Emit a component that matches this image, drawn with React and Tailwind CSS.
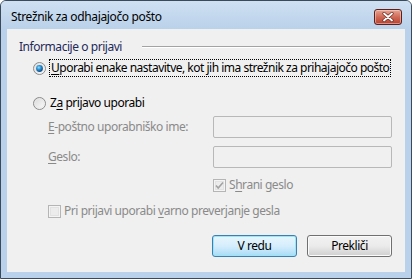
// Windows 7 style "outgoing mail server" dialog
const font = { fontFamily: '"Noto Sans", "Open Sans", sans-serif' };

function Radio({ checked }) {
  return (
    <svg width="13" height="13" viewBox="0 0 13 13" className="shrink-0">
      <defs>
        <linearGradient id="rfill" x1="0" y1="0" x2="1" y2="1">
          <stop offset="0" stopColor="#d6d6d6" />
          <stop offset="1" stopColor="#ffffff" />
        </linearGradient>
        <radialGradient id="rdot" cx="0.4" cy="0.35" r="0.7">
          <stop offset="0" stopColor="#8fe0ff" />
          <stop offset="0.45" stopColor="#2a8fd2" />
          <stop offset="1" stopColor="#0b3f74" />
        </radialGradient>
      </defs>
      <circle cx="6.5" cy="6.5" r="6" fill="url(#rfill)" stroke="#8b8b8b" strokeWidth="1" />
      <circle cx="6.5" cy="6.5" r="4.6" fill="none" stroke="#e8e8e8" strokeWidth="0.8" />
      {checked && <circle cx="6.5" cy="6.5" r="3.4" fill="url(#rdot)" />}
    </svg>
  );
}

function Check({ checked }) {
  return (
    <svg width="13" height="13" viewBox="0 0 13 13" className="shrink-0">
      <rect x="0.5" y="0.5" width="12" height="12" fill="#f4f4f4" stroke="#b5b5b5" />
      <rect x="2.5" y="2.5" width="8" height="8" fill="#ececec" stroke="#e2e2e2" />
      {checked && (
        <path d="M3 6.5 L5.2 9 L10 3.5" fill="none" stroke="#a2a2a2" strokeWidth="1.6" />
      )}
    </svg>
  );
}

function U({ children }) {
  return <span className="underline underline-offset-2 decoration-1">{children}</span>;
}

export default function App() {
  return (
    <div
      className="w-[412px] h-[279px] flex flex-col bg-[#b9d1ea] border border-[#3b4a5a] rounded-t-[6px] overflow-hidden text-[12px] leading-[16px] whitespace-nowrap"
      style={font}
    >
      {/* title bar */}
      <div className="h-[28px] shrink-0 flex items-start bg-gradient-to-b from-[#cfe0f2] to-[#b9d1ea]">
        <div className="pl-[10px] pt-[8px] text-black tracking-[-0.35px]">Strežnik za odhajajočo pošto</div>
        <div className="ml-auto mr-[9px] mt-[8px] w-[28px] h-[16px] rounded-[3px] border border-[#5a1f1f] bg-gradient-to-b from-[#e8a493] via-[#cf6a57] to-[#b8402e] flex items-center justify-center shadow-[inset_0_0_0_1px_rgba(255,220,210,0.5)]">
          <svg width="12" height="10" viewBox="0 0 12 10">
            <path d="M2 1.5 L10 8.5 M10 1.5 L2 8.5" stroke="#6b2a22" strokeWidth="3.2" strokeLinecap="round" />
            <path d="M2 1.5 L10 8.5 M10 1.5 L2 8.5" stroke="#ffffff" strokeWidth="1.8" strokeLinecap="round" />
          </svg>
        </div>
      </div>

      {/* client area */}
      <div className="flex-1 mx-[6px] mb-[6px] bg-[#f0f0f0] flex flex-col pr-[13px] text-black tracking-[-0.45px]">
        {/* group header */}
        <div className="mt-[11px] h-[14px] flex items-center pl-[12px]">
          <span className="text-[#1e2a5a]">Informacije o prijavi</span>
          <div className="flex-1 ml-[20px] mr-[2px] border-t border-[#a3a3a3] border-b border-b-white" />
        </div>

        {/* radio 1 */}
        <div className="mt-[5px] h-[18px] flex items-center pl-[26px]">
          <Radio checked />
          <div className="ml-[3px] h-[18px] leading-[15px] px-[1px] border border-dotted border-black tracking-[-0.5px]">
            <U>U</U>porabi enake nastavitve, kot jih ima strežnik za prihajajočo pošto
          </div>
        </div>

        {/* radio 2 */}
        <div className="mt-[17px] h-[18px] flex items-center pl-[26px]">
          <Radio />
          <div className="ml-[4px]">
            Z<U>a</U> prijavo uporabi
          </div>
        </div>

        {/* user name */}
        <div className="mt-[4px] h-[22px] flex items-center pl-[41px] text-[#8a8a8a]">
          <div>
            <U>E</U>-poštno uporabniško ime:
          </div>
          <div className="ml-auto w-[179px] h-[22px] border border-[#b8b8b8] rounded-[2px] bg-[#f0f0f0]" />
        </div>

        {/* password */}
        <div className="mt-[8px] h-[22px] flex items-center pl-[41px] text-[#8a8a8a]">
          <div>
            <U>G</U>eslo:
          </div>
          <div className="ml-auto w-[179px] h-[22px] border border-[#b8b8b8] rounded-[2px] bg-[#f0f0f0]" />
        </div>

        {/* remember password */}
        <div className="mt-[9px] h-[16px] flex items-center pl-[206px] text-[#8a8a8a]">
          <Check checked />
          <div className="ml-[3px]">
            S<U>h</U>rani geslo
          </div>
        </div>

        {/* secure password auth */}
        <div className="mt-[10px] h-[16px] flex items-center pl-[41px] text-[#8a8a8a]">
          <Check />
          <div className="ml-[3px]">
            Pri prijavi uporabi <U>v</U>arno preverjanje gesla
          </div>
        </div>

        {/* buttons */}
        <div className="mt-[16px] flex justify-end gap-[10px]">
          <button className="w-[85px] h-[22px] rounded-[3px] border border-[#3c7fb1] bg-gradient-to-b from-[#e8f6fd] via-[#d5eefc] to-[#a9dbf6] shadow-[inset_0_0_0_1px_#9ce4fa] text-black">
            V redu
          </button>
          <button className="w-[85px] h-[22px] rounded-[3px] border border-[#707070] bg-gradient-to-b from-[#f2f2f2] via-[#ebebeb] to-[#cfcfcf] shadow-[inset_0_0_0_1px_#fbfbfb] text-black">
            Prekliči
          </button>
        </div>
      </div>
    </div>
  );
}
